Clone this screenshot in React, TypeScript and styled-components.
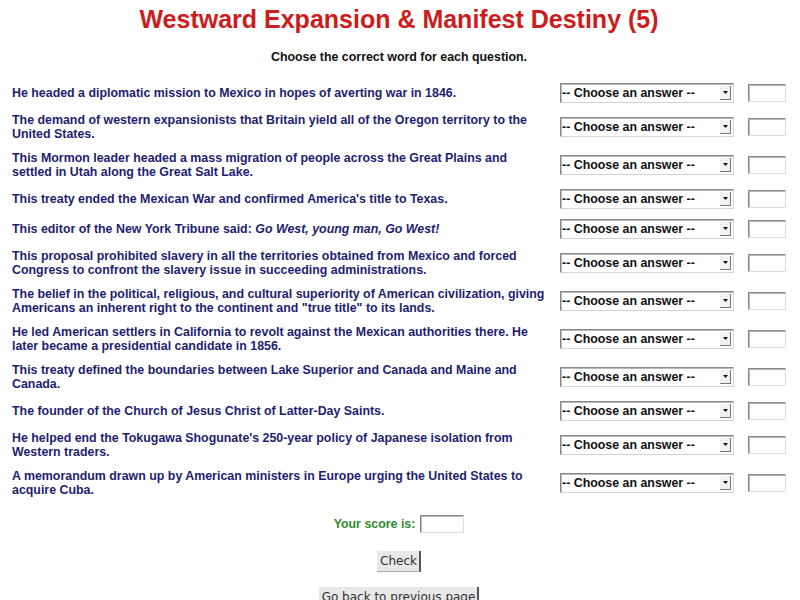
import React, { useState } from 'react';
import styled, { createGlobalStyle } from 'styled-components';

const GlobalStyle = createGlobalStyle`
  body {
    margin: 0;
    background: #ffffff;
    font-family: "Liberation Sans", Arial, sans-serif;
  }
`;

type Question = {
  id: number;
  text: React.ReactNode;
};

const questions: Question[] = [
  { id: 1, text: 'He headed a diplomatic mission to Mexico in hopes of averting war in 1846.' },
  { id: 2, text: 'The demand of western expansionists that Britain yield all of the Oregon territory to the United States.' },
  { id: 3, text: 'This Mormon leader headed a mass migration of people across the Great Plains and settled in Utah along the Great Salt Lake.' },
  { id: 4, text: "This treaty ended the Mexican War and confirmed America's title to Texas." },
  {
    id: 5,
    text: (
      <>
        This editor of the New York Tribune said: <em>Go West, young man, Go West!</em>
      </>
    ),
  },
  { id: 6, text: 'This proposal prohibited slavery in all the territories obtained from Mexico and forced Congress to confront the slavery issue in succeeding administrations.' },
  { id: 7, text: 'The belief in the political, religious, and cultural superiority of American civilization, giving Americans an inherent right to the continent and "true title" to its lands.' },
  { id: 8, text: 'He led American settlers in California to revolt against the Mexican authorities there. He later became a presidential candidate in 1856.' },
  { id: 9, text: 'This treaty defined the boundaries between Lake Superior and Canada and Maine and Canada.' },
  { id: 10, text: 'The founder of the Church of Jesus Christ of Latter-Day Saints.' },
  { id: 11, text: "He helped end the Tokugawa Shogunate's 250-year policy of Japanese isolation from Western traders." },
  { id: 12, text: 'A memorandum drawn up by American ministers in Europe urging the United States to acquire Cuba.' },
];

const answers = [
  'John Slidell',
  'Fifty-four Forty or Fight',
  'Brigham Young',
  'Treaty of Guadalupe Hidalgo',
  'Horace Greeley',
  'Wilmot Proviso',
  'Manifest Destiny',
  'John C. Fremont',
  'Webster-Ashburton Treaty',
  'Joseph Smith',
  'Matthew Perry',
  'Ostend Manifesto',
];

function App() {
  const [selected, setSelected] = useState<Record<number, string>>({});

  return (
    <Page>
      <GlobalStyle />
      <Title>Westward Expansion &amp; Manifest Destiny (5)</Title>
      <Subtitle>Choose the correct word for each question.</Subtitle>
      <QuizList>
        {questions.map(q => (
          <Row key={q.id}>
            <QuestionText>{q.text}</QuestionText>
            <SelectBox>
              <AnswerSelect
                value={selected[q.id] ?? ''}
                onChange={e => setSelected({ ...selected, [q.id]: e.target.value })}
              >
                <option value=''>-- Choose an answer --</option>
                {answers.map(a => (
                  <option key={a} value={a}>
                    {a}
                  </option>
                ))}
              </AnswerSelect>
              <ArrowButton>
                <svg width='5' height='3' viewBox='0 0 5 3'>
                  <path d='M0 0h5L2.5 3z' fill='#111' />
                </svg>
              </ArrowButton>
            </SelectBox>
            <ResultInput type='text' readOnly />
          </Row>
        ))}
      </QuizList>
      <ScoreRow>
        <ScoreLabel>Your score is:</ScoreLabel>
        <ScoreInput type='text' readOnly />
      </ScoreRow>
      <ButtonRow $top={18}>
        <PlainButton>Check</PlainButton>
      </ButtonRow>
      <ButtonRow $top={15}>
        <PlainButton>Go back to previous page</PlainButton>
      </ButtonRow>
    </Page>
  );
}

export default App;

const Page = styled.div`
  width: 774px;
  padding: 5px 14px 0 12px;
`;

const Title = styled.h1`
  margin: 0;
  font-size: 25px;
  line-height: 29px;
  font-weight: bold;
  text-align: center;
  color: #cc1c1c;
`;

const Subtitle = styled.p`
  margin: 16px 0 14px;
  font-size: 12.4px;
  line-height: 14px;
  font-weight: bold;
  text-align: center;
  color: #111;
`;

const QuizList = styled.div`
  display: flex;
  flex-direction: column;
`;

const Row = styled.div`
  display: grid;
  grid-template-columns: 536px 174px 38px;
  column-gap: 12px;
  align-items: center;
  padding: 5px 0;
  min-height: 20px;
`;

const QuestionText = styled.div`
  font-size: 12.4px;
  line-height: 14px;
  font-weight: bold;
  color: #1e1e70;
`;

const SelectBox = styled.div`
  position: relative;
  height: 20px;
`;

const AnswerSelect = styled.select`
  appearance: none;
  width: 174px;
  height: 20px;
  margin: 0;
  padding: 0 14px 0 1px;
  box-sizing: border-box;
  background: #fff;
  border: 1px solid;
  border-color: #8a8a8a #d4d4d4 #d4d4d4 #8a8a8a;
  box-shadow: inset 1px 1px 0 #b8b8b8;
  font-family: "Liberation Sans", Arial, sans-serif;
  font-size: 12.4px;
  font-weight: bold;
  color: #111;
  outline: none;
`;

const ArrowButton = styled.span`
  position: absolute;
  top: 3px;
  right: 3px;
  width: 10px;
  height: 13px;
  display: flex;
  align-items: center;
  justify-content: center;
  background: #f2f2f2;
  border-right: 1px solid #777;
  border-bottom: 1px solid #777;
  pointer-events: none;
`;

const ResultInput = styled.input`
  width: 38px;
  height: 18px;
  margin: 0 0 0 2px;
  padding: 0;
  box-sizing: border-box;
  border: 1px solid;
  border-color: #8a8a8a #dddddd #dddddd #8a8a8a;
  box-shadow: inset 1px 1px 0 #b8b8b8;
  background: #fff;
  outline: none;
`;

const ScoreRow = styled.div`
  display: flex;
  align-items: center;
  justify-content: center;
  gap: 5px;
  margin-top: 13px;
  height: 18px;
`;

const ScoreLabel = styled.span`
  font-size: 12.4px;
  font-weight: bold;
  color: #2e8b2e;
`;

const ScoreInput = styled(ResultInput)`
  width: 44px;
  margin: 0;
`;

const ButtonRow = styled.div<{ $top: number }>`
  display: flex;
  justify-content: center;
  margin-top: ${props => props.$top}px;
`;

const PlainButton = styled.button`
  height: 21px;
  margin: 0;
  padding: 0 2px 0 3px;
  background: #e8e8e8;
  border: none;
  border-right: 2px solid #555;
  border-bottom: 1px solid #aaa;
  font-family: "DejaVu Sans", sans-serif;
  font-size: 12px;
  color: #333;
  cursor: pointer;
`;
